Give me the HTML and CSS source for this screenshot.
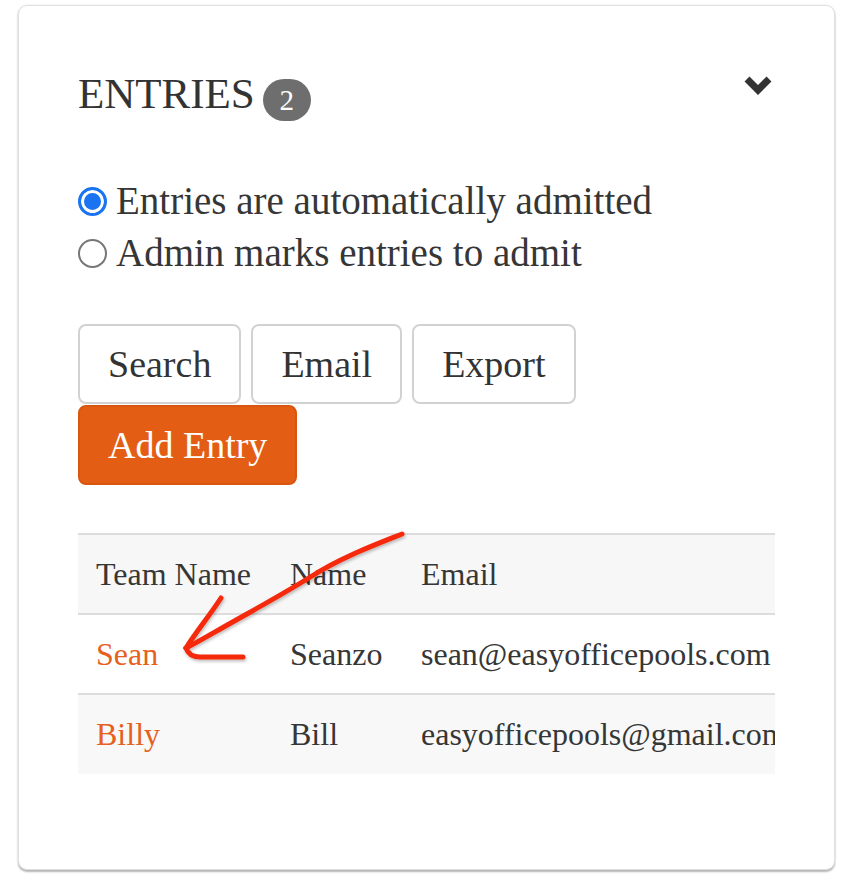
FILE: index.html
```html
<!DOCTYPE html>
<html lang="en">
<head>
<meta charset="utf-8">
<title>Entries</title>
<link rel="stylesheet" href="styles.css">
</head>
<body>
<div class="page">
  <section class="card">
    <div class="card-head">
      <h2 class="title">ENTRIES<span class="badge">2</span></h2>
      <svg class="chevron" width="32" height="24" viewBox="0 0 32 24" aria-hidden="true">
        <polyline points="5,6 16,17 27,6" fill="none" stroke="#333" stroke-width="7" stroke-linejoin="miter"/>
      </svg>
    </div>

    <div class="options">
      <label class="option"><input type="radio" name="admit" checked><span>Entries are automatically admitted</span></label>
      <label class="option"><input type="radio" name="admit"><span>Admin marks entries to admit</span></label>
    </div>

    <div class="actions">
      <button class="btn">Search</button>
      <button class="btn">Email</button>
      <button class="btn">Export</button>
      <button class="btn btn-primary">Add Entry</button>
    </div>

    <div class="table-wrap">
      <table class="entries">
        <thead>
          <tr><th class="col-team">Team Name</th><th class="col-name">Name</th><th>Email</th></tr>
        </thead>
        <tbody>
          <tr><td><a href="#">Sean</a></td><td>Seanzo</td><td>sean@easyofficepools.com</td></tr>
          <tr class="alt"><td><a href="#">Billy</a></td><td>Bill</td><td>easyofficepools@gmail.com</td></tr>
        </tbody>
      </table>
    </div>
  </section>

  <svg class="annotation" width="842" height="882" viewBox="0 0 842 882" aria-hidden="true">
    <defs>
      <filter id="sh" x="-10%" y="-10%" width="120%" height="130%">
        <feDropShadow dx="1" dy="2" stdDeviation="1.5" flood-color="#000" flood-opacity="0.25"/>
      </filter>
    </defs>
    <g fill="none" stroke="#f52a0c" stroke-width="5" stroke-linecap="round" stroke-linejoin="round" filter="url(#sh)">
      <path d="M402,534 C372,546 340,558 312,576 C280,596 250,612 222,628 C208,636 196,643 186,648"/>
      <path d="M221,598 C210,615 196,632 186,648"/>
      <path d="M186,648 C188,654 192,657 200,657 L243,657"/>
    </g>
  </svg>
</div>
</body>
</html>
```

FILE: styles.css
```css
* { box-sizing: border-box; }

html, body {
  margin: 0;
  padding: 0;
  background: #ffffff;
}

body {
  font-family: "Liberation Serif", "DejaVu Serif", serif;
  color: #353535;
}

.page {
  position: relative;
  width: 842px;
  height: 882px;
  padding: 5px 7px 0 18px;
}

.card {
  background: #ffffff;
  border: 1px solid #e0e0e0;
  border-radius: 9px;
  box-shadow: 0 2px 2px rgba(0, 0, 0, 0.28), 0 0 3px rgba(0, 0, 0, 0.08);
  padding: 62px 59px 95px 59px;
}

.card-head {
  display: flex;
  justify-content: space-between;
  align-items: flex-start;
}

.title {
  display: flex;
  align-items: flex-start;
  margin: 0;
  font-weight: normal;
  font-size: 43px;
  line-height: 52px;
  color: #333;
}

.badge {
  display: inline-flex;
  align-items: center;
  justify-content: center;
  width: 48px;
  height: 42px;
  margin: 11px 0 0 8px;
  border-radius: 21px;
  background: #6e6e6e;
  color: #ffffff;
  font-size: 29px;
  line-height: 1;
}

.chevron {
  display: block;
  margin-top: 5px;
  margin-right: 1px;
}

.options {
  margin-top: 54px;
  display: flex;
  flex-direction: column;
}

.option {
  display: flex;
  align-items: center;
  gap: 9px;
  font-size: 39px;
  line-height: 52px;
  color: #363636;
}

.option input {
  appearance: none;
  -webkit-appearance: none;
  margin: 0;
  width: 29px;
  height: 29px;
  border-radius: 50%;
  border: 2px solid #777;
  background: #fff;
  flex: none;
}

.option input:checked {
  border: 3px solid #1a73f0;
  background: #1a73f0;
  box-shadow: inset 0 0 0 3px #ffffff;
}

.actions {
  margin-top: 45px;
  display: flex;
  flex-wrap: wrap;
  gap: 1px 10px;
  width: 100%;
}

.btn {
  height: 80px;
  padding: 0 28px;
  border: 2px solid #d2d2d2;
  border-radius: 8px;
  background: #ffffff;
  color: #333;
  font-family: inherit;
  font-size: 38px;
  line-height: 44px;
}

.btn-primary {
  background: #e35e14;
  border-color: #d8560f;
  color: #ffffff;
}

.table-wrap {
  margin-top: 48px;
  width: 100%;
  overflow: hidden;
}

.entries {
  width: max-content;
  border-collapse: collapse;
  white-space: nowrap;
  font-size: 32px;
  color: #363636;
}

.entries th,
.entries td {
  height: 80px;
  padding: 0 18px;
  text-align: left;
  font-weight: normal;
  vertical-align: middle;
  border-top: 2px solid #dddddd;
}

.entries thead th {
  background: #f7f7f7;
}

.entries tbody tr.alt td {
  background: #f8f8f8;
}

.col-team { width: 194px; }
.col-name { width: 131px; }

.entries a {
  color: #e5611d;
  text-decoration: none;
}

.annotation {
  position: absolute;
  left: 0;
  top: 0;
  pointer-events: none;
}
```
